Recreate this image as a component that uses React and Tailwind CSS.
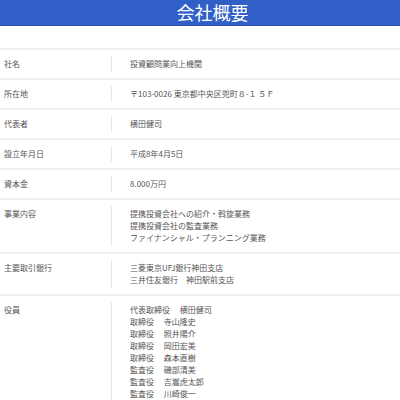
import React from 'react';

const rows = [
    { label: '社名', lines: ['投資顧問業向上機関'] },
    { label: '所在地', lines: ['〒103-0026 東京都中央区兜町８-１ ５Ｆ'] },
    { label: '代表者', lines: ['横田健司'] },
    { label: '設立年月日', lines: ['平成8年4月5日'] },
    { label: '資本金', lines: ['8.000万円'] },
    { label: '事業内容', lines: ['提携投資会社への紹介・斡旋業務', '提携投資会社の監査業務', 'ファイナンシャル・プランニング業務'] },
    { label: '主要取引銀行', lines: ['三菱東京UFJ銀行神田支店', '三井住友銀行　神田駅前支店'] },
    {
        label: '役員',
        lines: [
            '代表取締役　 横田健司',
            '取締役　 寺山隆史',
            '取締役　 照井陽介',
            '取締役　 岡田宏美',
            '取締役　 森本直樹',
            '監査役　 磯部清美',
            '監査役　 吉嵩虎太郎',
            '監査役　 川崎俊一',
        ],
    },
];

export default function App() {
    return (
        <div className="w-[400px] h-[400px] overflow-hidden bg-white font-['Noto_Sans_CJK_JP','Noto_Sans',sans-serif] text-[#555]">
            <div className="h-[26px] bg-[#2f5fc7] border-b border-[#2953b3] flex justify-center items-center">
                <h1 className="text-[18px] leading-[25px] text-white pl-[25px]">会社概要</h1>
            </div>
            <div className="mt-[22px] border-t-2 border-[#f0f0f0]">
                {rows.map((row) => (
                    <div key={row.label} className="flex py-[6px] border-b-2 border-[#f0f0f0]">
                        <div className="w-[111px] pl-[4px] py-[2px] text-[8px] leading-[12px]">{row.label}</div>
                        <div className="flex-1 border-l border-[#e6e6e6] pl-[18px] py-[2px] text-[8px] leading-[12px]">
                            {row.lines.map((line, i) => (
                                <div key={i} className="whitespace-pre">{line}</div>
                            ))}
                        </div>
                    </div>
                ))}
            </div>
        </div>
    );
}
